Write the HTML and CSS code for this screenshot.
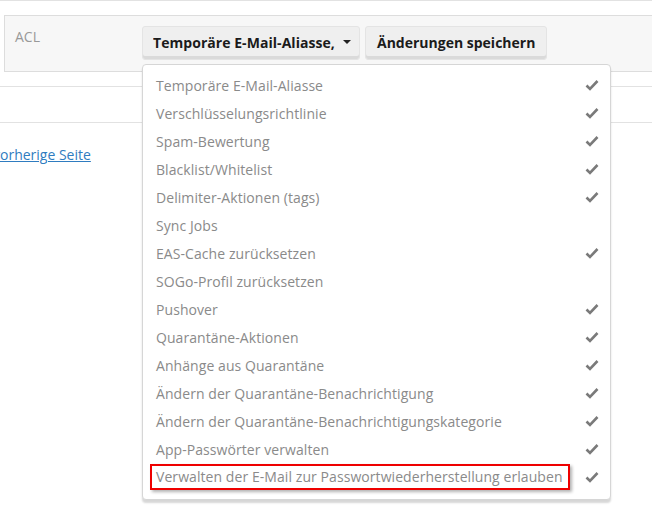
FILE: index.html
```html
<!DOCTYPE html>
<html lang="de">
<head>
<meta charset="utf-8">
<title>ACL</title>
<link rel="stylesheet" href="styles.css">
</head>
<body>
<div class="topline"></div>
<div class="panel">
  <div class="label">ACL</div>
  <div class="controls">
    <div class="dropdown">
      <button class="btn select"><span class="sel-text">Temporäre E-Mail-Aliasse, Verschlüsselungsrichtlinie, Spam-Bewertung</span><span class="caret"></span></button>
      <ul class="menu">
        <li><span>Temporäre E-Mail-Aliasse</span><svg class="check" viewBox="0 0 14 12"><path d="M1.5 6.5 L5 10 L12.5 2"/></svg></li>
        <li><span>Verschlüsselungsrichtlinie</span><svg class="check" viewBox="0 0 14 12"><path d="M1.5 6.5 L5 10 L12.5 2"/></svg></li>
        <li><span>Spam-Bewertung</span><svg class="check" viewBox="0 0 14 12"><path d="M1.5 6.5 L5 10 L12.5 2"/></svg></li>
        <li><span>Blacklist/Whitelist</span><svg class="check" viewBox="0 0 14 12"><path d="M1.5 6.5 L5 10 L12.5 2"/></svg></li>
        <li><span>Delimiter-Aktionen (tags)</span><svg class="check" viewBox="0 0 14 12"><path d="M1.5 6.5 L5 10 L12.5 2"/></svg></li>
        <li><span>Sync Jobs</span></li>
        <li><span>EAS-Cache zurücksetzen</span><svg class="check" viewBox="0 0 14 12"><path d="M1.5 6.5 L5 10 L12.5 2"/></svg></li>
        <li><span>SOGo-Profil zurücksetzen</span></li>
        <li><span>Pushover</span><svg class="check" viewBox="0 0 14 12"><path d="M1.5 6.5 L5 10 L12.5 2"/></svg></li>
        <li><span>Quarantäne-Aktionen</span><svg class="check" viewBox="0 0 14 12"><path d="M1.5 6.5 L5 10 L12.5 2"/></svg></li>
        <li><span>Anhänge aus Quarantäne</span><svg class="check" viewBox="0 0 14 12"><path d="M1.5 6.5 L5 10 L12.5 2"/></svg></li>
        <li><span>Ändern der Quarantäne-Benachrichtigung</span><svg class="check" viewBox="0 0 14 12"><path d="M1.5 6.5 L5 10 L12.5 2"/></svg></li>
        <li><span>Ändern der Quarantäne-Benachrichtigungskategorie</span><svg class="check" viewBox="0 0 14 12"><path d="M1.5 6.5 L5 10 L12.5 2"/></svg></li>
        <li><span>App-Passwörter verwalten</span><svg class="check" viewBox="0 0 14 12"><path d="M1.5 6.5 L5 10 L12.5 2"/></svg></li>
        <li><span class="marked">Verwalten der E-Mail zur Passwortwiederherstellung erlauben</span><svg class="check" viewBox="0 0 14 12"><path d="M1.5 6.5 L5 10 L12.5 2"/></svg></li>
      </ul>
    </div>
    <button class="btn save">Änderungen speichern</button>
  </div>
</div>
<div class="rowline first"></div>
<div class="rowline second"></div>
<a class="back" href="#">vorherige Seite</a>
</body>
</html>
```
FILE: styles.css
```css
* { box-sizing: border-box; }
html, body { margin: 0; padding: 0; overflow: hidden; }
body {
  width: 652px;
  height: 526px;
  background: #fff;
  font-family: "Open Sans", "Noto Sans", sans-serif;
  font-size: 14px;
  color: #333;
}
.topline {
  height: 1px;
  background: #e2e2e2;
}
.panel {
  margin: 14px 0 0 4px;
  width: 700px;
  height: 57px;
  border: 1px solid #dddddd;
  background: #f7f7f7;
  display: flex;
}
.label {
  width: 137px;
  padding: 12px 0 0 10px;
  color: #999;
  font-size: 14px;
  line-height: 18px;
}
.controls {
  display: flex;
  gap: 5px;
  padding-top: 10px;
  align-items: flex-start;
}
.dropdown {
  position: relative;
}
.btn {
  font-family: inherit;
  font-size: 14px;
  font-weight: 700;
  color: #1b1b1b;
  height: 34px;
  border: 1px solid #e4e4e4;
  border-radius: 3px;
  background: #efefef;
  box-shadow: inset 0 -3px 0 #dadada;
  padding: 0 12px 2px;
  display: flex;
  align-items: center;
  white-space: nowrap;
  cursor: pointer;
}
.save {
  padding: 0 11px 2px;
}
.select {
  width: 218px;
  padding-left: 10px;
  padding-right: 8px;
}
.sel-text {
  display: block;
  width: 186px;
  overflow: hidden;
  letter-spacing: 0.05px;
}
.caret {
  margin-left: 6px;
  width: 0;
  height: 0;
  border-left: 4px solid transparent;
  border-right: 4px solid transparent;
  border-top: 4px solid #222;
}
.menu {
  position: absolute;
  top: 38px;
  left: 0;
  width: 469px;
  margin: 0;
  padding: 6px 0 8px;
  list-style: none;
  background: #fff;
  border: 1px solid #d6d6d6;
  border-radius: 4px;
  box-shadow: 0 3px 2px rgba(0, 0, 0, 0.16);
  z-index: 10;
}
.menu li {
  height: 28px;
  display: flex;
  align-items: center;
  justify-content: space-between;
  padding: 0 11px 0 13px;
  color: #8a8a8a;
  font-size: 14px;
  letter-spacing: 0.07px;
  white-space: nowrap;
}
.check {
  width: 14px;
  height: 12px;
  fill: none;
  stroke: #7a7a7a;
  stroke-width: 2.6;
}
.marked {
  border: 2px solid #ee0000;
  margin-left: -6px;
  padding: 1px 5px 1px 4px;
  line-height: 20px;
  box-shadow: 2px 2px 3px rgba(0, 0, 0, 0.3);
}
.rowline {
  height: 1px;
  background: #e2e2e2;
}
.rowline.first { margin-top: 14px; }
.rowline.second { margin-top: 35px; }
.back {
  display: inline-block;
  margin: 22px 0 0 -7px;
  color: #2f7cc0;
  text-decoration: underline;
  font-size: 14px;
  line-height: 20px;
}
```
